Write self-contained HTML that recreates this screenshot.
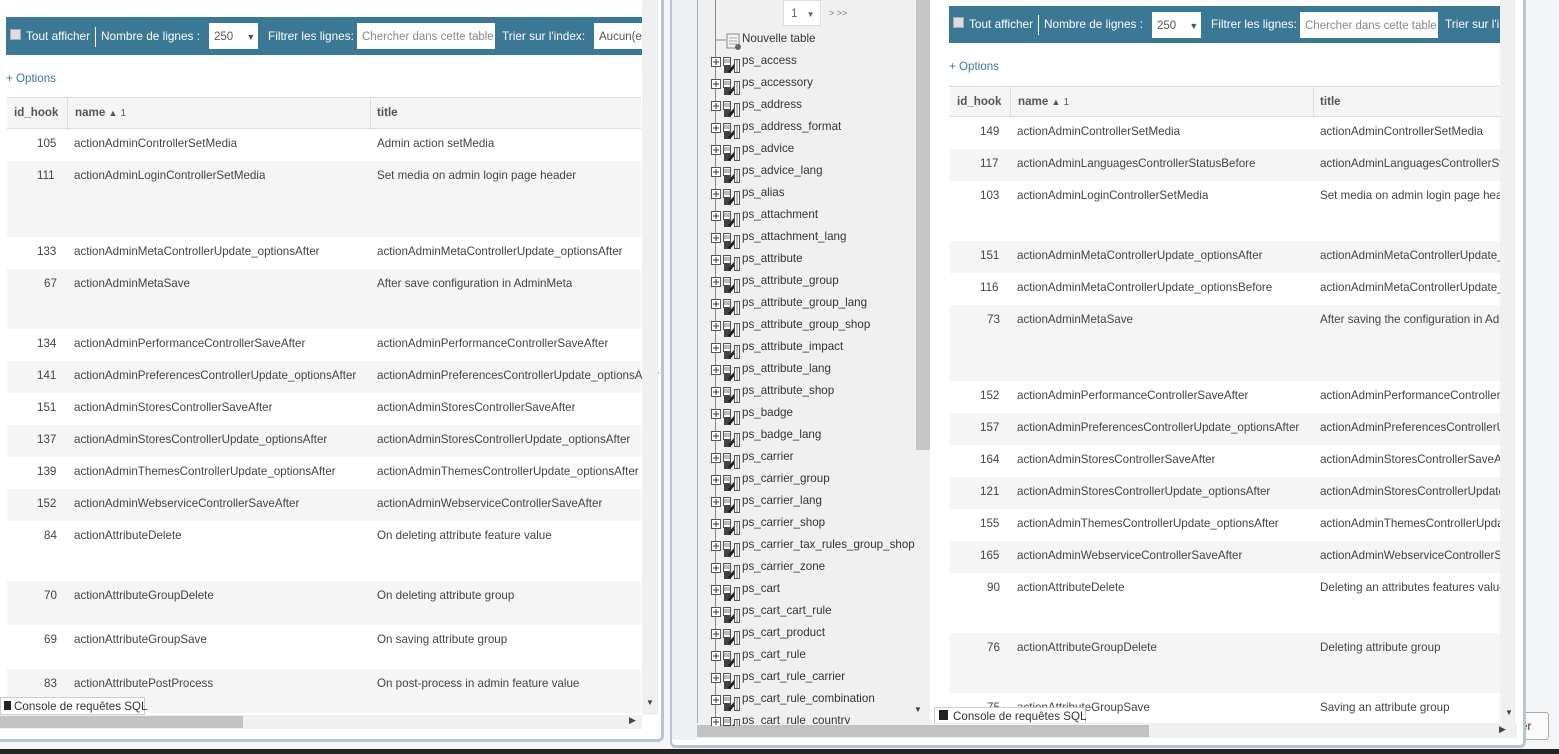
<!DOCTYPE html>
<html><head><meta charset="utf-8"><style>
*{box-sizing:border-box;margin:0;padding:0}
body{width:1559px;height:754px;position:relative;overflow:hidden;background:#f3f5f7;font-family:"Liberation Sans",sans-serif;font-size:11.6px;color:#444}
.a{position:absolute}
.win{position:absolute;background:#fff;overflow:hidden}
.bar{position:absolute;background:#3a7896;color:#fff;font-size:11.8px}
.bar span{position:absolute;top:12px;white-space:nowrap}
.inp{position:absolute;background:#fff;color:#888;font-size:11.5px;padding:8px 5px;white-space:nowrap;overflow:hidden}
.cb{position:absolute;width:11px;height:11px;background:#ddd;border:1px solid #aaa}
.row{position:absolute;left:0;right:0}
.row span{position:absolute;top:8px;white-space:nowrap;overflow:hidden}
.g{background:#f5f5f5}
.tree div{position:absolute;left:742px;white-space:nowrap;font-size:11.6px;color:#333}
.con{white-space:nowrap}
</style></head><body>
<div class="a" style="left:0;top:749px;width:1559px;height:5px;background:#222"></div>
<div class="a" style="left:1500px;top:712px;width:49px;height:28px;border:1px solid #aaa;border-radius:3px;background:#fafafa;color:#333;padding:7px 0 0 20px">er</div>

<!-- LEFT WINDOW -->
<div class="win" style="left:0;top:0;width:664px;height:742px;border-right:3px solid #b8c4d0;border-bottom:3px solid #b8c4d0;border-bottom-right-radius:6px">
 <div class="bar" style="left:6px;top:17px;width:636px;height:38px">
  <div class="cb" style="left:4px;top:12px"></div>
  <span style="left:20px">Tout afficher</span>
  <div class="a" style="left:89px;top:10px;width:1px;height:20px;background:#fff"></div>
  <span style="left:95px">Nombre de lignes :</span>
  <div class="inp" style="left:203px;top:6px;width:49px;height:26px;color:#555">250 <b style="font-size:9px;margin-left:10px">▼</b></div>
  <span style="left:262px">Filtrer les lignes:</span>
  <div class="inp" style="left:351px;top:6px;width:138px;height:26px">Chercher dans cette table</div>
  <span style="left:496px">Trier sur l'index:</span>
  <div class="inp" style="left:588px;top:6px;width:60px;height:26px;color:#555">Aucun(e)</div>
 </div>
 <div class="a" style="left:6px;top:72px;color:#3a7896">+ Options</div>
 <div class="a" style="left:7px;top:97px;width:634px;height:640px">
  <div class="row g" style="top:0;height:32px;border-top:1px solid #ddd;border-bottom:1px solid #ddd;font-weight:bold;color:#555"><span style="left:7px">id_hook</span><span style="left:68px">name <small style="font-size:9px">▲</small> <small style="font-weight:normal">1</small></span><span style="left:370px">title</span><div class="a" style="left:60px;top:0;width:1px;height:32px;background:#ddd"></div><div class="a" style="left:363px;top:0;width:1px;height:32px;background:#ddd"></div></div>
  <div class="row" style="top:32px;height:32px"><span style="left:30px">105</span><span style="left:67px">actionAdminControllerSetMedia</span><span style="left:370px">Admin action setMedia</span></div>
  <div class="row g" style="top:64px;height:76px"><span style="left:30px">111</span><span style="left:67px">actionAdminLoginControllerSetMedia</span><span style="left:370px">Set media on admin login page header</span></div>
  <div class="row" style="top:140px;height:32px"><span style="left:30px">133</span><span style="left:67px">actionAdminMetaControllerUpdate_optionsAfter</span><span style="left:370px">actionAdminMetaControllerUpdate_optionsAfter</span></div>
  <div class="row g" style="top:172px;height:60px"><span style="left:37px">67</span><span style="left:67px">actionAdminMetaSave</span><span style="left:370px">After save configuration in AdminMeta</span></div>
  <div class="row" style="top:232px;height:32px"><span style="left:30px">134</span><span style="left:67px">actionAdminPerformanceControllerSaveAfter</span><span style="left:370px">actionAdminPerformanceControllerSaveAfter</span></div>
  <div class="row g" style="top:264px;height:32px"><span style="left:30px">141</span><span style="left:67px;width:290px;text-overflow:ellipsis">actionAdminPreferencesControllerUpdate_optionsAfter</span><span style="left:370px">actionAdminPreferencesControllerUpdate_optionsAfter</span></div>
  <div class="row" style="top:296px;height:32px"><span style="left:30px">151</span><span style="left:67px">actionAdminStoresControllerSaveAfter</span><span style="left:370px">actionAdminStoresControllerSaveAfter</span></div>
  <div class="row g" style="top:328px;height:32px"><span style="left:30px">137</span><span style="left:67px">actionAdminStoresControllerUpdate_optionsAfter</span><span style="left:370px">actionAdminStoresControllerUpdate_optionsAfter</span></div>
  <div class="row" style="top:360px;height:32px"><span style="left:30px">139</span><span style="left:67px">actionAdminThemesControllerUpdate_optionsAfter</span><span style="left:370px">actionAdminThemesControllerUpdate_optionsAfter</span></div>
  <div class="row g" style="top:392px;height:32px"><span style="left:30px">152</span><span style="left:67px">actionAdminWebserviceControllerSaveAfter</span><span style="left:370px">actionAdminWebserviceControllerSaveAfter</span></div>
  <div class="row" style="top:424px;height:60px"><span style="left:37px">84</span><span style="left:67px">actionAttributeDelete</span><span style="left:370px">On deleting attribute feature value</span></div>
  <div class="row g" style="top:484px;height:44px"><span style="left:37px">70</span><span style="left:67px">actionAttributeGroupDelete</span><span style="left:370px">On deleting attribute group</span></div>
  <div class="row" style="top:528px;height:44px"><span style="left:37px">69</span><span style="left:67px">actionAttributeGroupSave</span><span style="left:370px">On saving attribute group</span></div>
  <div class="row g" style="top:572px;height:44px"><span style="left:37px">83</span><span style="left:67px">actionAttributePostProcess</span><span style="left:370px">On post-process in admin feature value</span></div>
 </div>
 <div class="a con" style="left:0;top:697px;width:145px;height:18px;border:1px solid #ccc;background:#fff;padding:2px 0 0 3px;color:#333"><span style="display:inline-block;width:7px;height:9px;background:#222;margin-right:3px"></span>Console de requêtes SQL</div>
 <div class="a" style="left:0;top:715px;width:642px;height:14px;background:#f0f0f0"><div class="a" style="left:0;top:1px;width:243px;height:12px;background:#c2c2c2"></div><div class="a" style="left:629px;top:0;font-size:9px">▶</div></div>
 <div class="a" style="left:642px;top:0;width:16px;height:715px;background:#f0f0f0"><div class="a" style="left:4px;top:698px;font-size:8px">▼</div></div>
</div>

<!-- RIGHT WINDOW -->
<div class="win" style="left:670px;top:0;width:856px;height:748px;border-left:2px solid #b8c4d0;border-right:3px solid #b8c4d0;border-bottom:3px solid #b8c4d0;border-radius:0 0 6px 6px">
 <div class="a" style="left:0;top:0;width:25px;height:740px;background:#eef1f4"></div>
 <div class="a" style="left:25px;top:0;width:233px;height:725px;background:#f0f0f0;border-left:1px solid #aaa"></div>
 <div class="a" style="left:244px;top:0;width:14px;height:450px;background:#c6c6c6"></div>
 <div class="a" style="left:258px;top:0;width:2px;height:725px;background:#ddd"></div>
 <div class="a" style="left:242px;top:705px;font-size:8px">▼</div>
 <div class="a" style="left:25px;top:723px;width:820px;height:15px;background:#f0f0f0"><div class="a" style="left:0;top:2px;width:452px;height:12px;background:#c2c2c2"></div><div class="a" style="left:802px;top:1px;font-size:9px">▶</div></div>
</div>
<div class="tree">
 <div class="a" style="left:783px;top:0;width:38px;height:26px;background:#fff;border:1px solid #ddd;padding:6px 0 0 7px;color:#666">1 <b style="font-size:8px;margin-left:6px">▼</b></div>
 <div style="left:829px;top:8px;font-size:9px;color:#777">&gt; &gt;&gt;</div>
 <div class="a" style="left:715px;top:0;width:1px;height:725px;background:#888"></div>
 <svg class="a" style="left:716px;top:31px" width="26" height="20"><path d="M0 9h10" stroke="#888"/><rect x="11" y="3" width="12" height="14" fill="#f4f4f4" stroke="#888"/><path d="M13 7h8M13 10h8M13 13h8" stroke="#aaa"/><circle cx="22" cy="16" r="3" fill="#666"/></svg>
 <div style="top:32px">Nouvelle table</div>
 <div style="top:54px">ps_access</div><div style="top:76px">ps_accessory</div><div style="top:98px">ps_address</div><div style="top:120px">ps_address_format</div><div style="top:142px">ps_advice</div><div style="top:164px">ps_advice_lang</div><div style="top:186px">ps_alias</div><div style="top:208px">ps_attachment</div><div style="top:230px">ps_attachment_lang</div><div style="top:252px">ps_attribute</div><div style="top:274px">ps_attribute_group</div><div style="top:296px">ps_attribute_group_lang</div><div style="top:318px">ps_attribute_group_shop</div><div style="top:340px">ps_attribute_impact</div><div style="top:362px">ps_attribute_lang</div><div style="top:384px">ps_attribute_shop</div><div style="top:406px">ps_badge</div><div style="top:428px">ps_badge_lang</div><div style="top:450px">ps_carrier</div><div style="top:472px">ps_carrier_group</div><div style="top:494px">ps_carrier_lang</div><div style="top:516px">ps_carrier_shop</div><div style="top:538px">ps_carrier_tax_rules_group_shop</div><div style="top:560px">ps_carrier_zone</div><div style="top:582px">ps_cart</div><div style="top:604px">ps_cart_cart_rule</div><div style="top:626px">ps_cart_product</div><div style="top:648px">ps_cart_rule</div><div style="top:670px">ps_cart_rule_carrier</div><div style="top:692px">ps_cart_rule_combination</div><div style="top:714px;height:10px;overflow:hidden">ps_cart_rule_country</div>
</div>
<svg class="a" style="left:708px;top:54px" width="34" height="672">
 <defs>
  <g id="it">
   <rect x="3.5" y="3.5" width="9" height="9" fill="#fff" stroke="#555"/>
   <path d="M5 8h6M8 5v6" stroke="#333"/>
   <rect x="15.5" y="3.5" width="7" height="8" fill="#fff" stroke="#555"/>
   <path d="M16 6h6M16 8h6" stroke="#777"/>
   <rect x="16" y="11" width="7" height="8" fill="#444"/>
   <path d="M20 17l6-7 2 2-6 7z" fill="#222"/>
   <rect x="26.5" y="5.5" width="5" height="13" fill="#fff" stroke="#555"/>
   <path d="M29 6v12" stroke="#777"/>
  </g>
 </defs>
 <use href="#it" y="0"/><use href="#it" y="22"/><use href="#it" y="44"/><use href="#it" y="66"/><use href="#it" y="88"/><use href="#it" y="110"/><use href="#it" y="132"/><use href="#it" y="154"/><use href="#it" y="176"/><use href="#it" y="198"/><use href="#it" y="220"/><use href="#it" y="242"/><use href="#it" y="264"/><use href="#it" y="286"/><use href="#it" y="308"/><use href="#it" y="330"/><use href="#it" y="352"/><use href="#it" y="374"/><use href="#it" y="396"/><use href="#it" y="418"/><use href="#it" y="440"/><use href="#it" y="462"/><use href="#it" y="484"/><use href="#it" y="506"/><use href="#it" y="528"/><use href="#it" y="550"/><use href="#it" y="572"/><use href="#it" y="594"/><use href="#it" y="616"/><use href="#it" y="638"/><use href="#it" y="660"/>
</svg>

<!-- right main content -->
<div class="a" style="left:930px;top:0;width:585px;height:723px;background:#fff;overflow:hidden">
 <div class="bar" style="left:19px;top:6px;width:560px;height:37px">
  <div class="cb" style="left:4px;top:11px"></div>
  <span style="left:20px;top:11px">Tout afficher</span>
  <div class="a" style="left:89px;top:9px;width:1px;height:20px;background:#fff"></div>
  <span style="left:95px;top:11px">Nombre de lignes :</span>
  <div class="inp" style="left:203px;top:6px;width:49px;height:26px;color:#555">250 <b style="font-size:9px;margin-left:10px">▼</b></div>
  <span style="left:262px;top:11px">Filtrer les lignes:</span>
  <div class="inp" style="left:351px;top:6px;width:138px;height:26px">Chercher dans cette table</div>
  <span style="left:496px;top:11px">Trier sur l'index:</span>
 </div>
 <div class="a" style="left:19px;top:60px;color:#3a7896">+ Options</div>
 <div class="a" style="left:19px;top:86px;width:551px;height:640px">
  <div class="row g" style="top:0;height:31px;border-top:1px solid #ddd;border-bottom:1px solid #ddd;font-weight:bold;color:#555"><span style="left:8px">id_hook</span><span style="left:69px">name <small style="font-size:9px">▲</small> <small style="font-weight:normal">1</small></span><span style="left:371px">title</span><div class="a" style="left:61px;top:0;width:1px;height:31px;background:#ddd"></div><div class="a" style="left:364px;top:0;width:1px;height:31px;background:#ddd"></div></div>
  <div class="row" style="top:31px;height:32px"><span style="left:31px">149</span><span style="left:68px">actionAdminControllerSetMedia</span><span style="left:371px">actionAdminControllerSetMedia</span></div>
  <div class="row g" style="top:63px;height:32px"><span style="left:31px">117</span><span style="left:68px">actionAdminLanguagesControllerStatusBefore</span><span style="left:371px">actionAdminLanguagesControllerStatusBefore</span></div>
  <div class="row" style="top:95px;height:60px"><span style="left:31px">103</span><span style="left:68px">actionAdminLoginControllerSetMedia</span><span style="left:371px">Set media on admin login page header</span></div>
  <div class="row g" style="top:155px;height:32px"><span style="left:31px">151</span><span style="left:68px">actionAdminMetaControllerUpdate_optionsAfter</span><span style="left:371px">actionAdminMetaControllerUpdate_optionsAfter</span></div>
  <div class="row" style="top:187px;height:32px"><span style="left:31px">116</span><span style="left:68px">actionAdminMetaControllerUpdate_optionsBefore</span><span style="left:371px">actionAdminMetaControllerUpdate_optionsBefore</span></div>
  <div class="row g" style="top:219px;height:76px"><span style="left:38px">73</span><span style="left:68px">actionAdminMetaSave</span><span style="left:371px">After saving the configuration in AdminMeta</span></div>
  <div class="row" style="top:295px;height:32px"><span style="left:31px">152</span><span style="left:68px">actionAdminPerformanceControllerSaveAfter</span><span style="left:371px">actionAdminPerformanceControllerSaveAfter</span></div>
  <div class="row g" style="top:327px;height:32px"><span style="left:31px">157</span><span style="left:68px;width:290px;text-overflow:ellipsis">actionAdminPreferencesControllerUpdate_optionsAfter</span><span style="left:371px">actionAdminPreferencesControllerUpdate_optionsAfter</span></div>
  <div class="row" style="top:359px;height:32px"><span style="left:31px">164</span><span style="left:68px">actionAdminStoresControllerSaveAfter</span><span style="left:371px">actionAdminStoresControllerSaveAfter</span></div>
  <div class="row g" style="top:391px;height:32px"><span style="left:31px">121</span><span style="left:68px">actionAdminStoresControllerUpdate_optionsAfter</span><span style="left:371px">actionAdminStoresControllerUpdate_optionsAfter</span></div>
  <div class="row" style="top:423px;height:32px"><span style="left:31px">155</span><span style="left:68px">actionAdminThemesControllerUpdate_optionsAfter</span><span style="left:371px">actionAdminThemesControllerUpdate_optionsAfter</span></div>
  <div class="row g" style="top:455px;height:32px"><span style="left:31px">165</span><span style="left:68px">actionAdminWebserviceControllerSaveAfter</span><span style="left:371px">actionAdminWebserviceControllerSaveAfter</span></div>
  <div class="row" style="top:487px;height:60px"><span style="left:38px">90</span><span style="left:68px">actionAttributeDelete</span><span style="left:371px">Deleting an attributes features value</span></div>
  <div class="row g" style="top:547px;height:60px"><span style="left:38px">76</span><span style="left:68px">actionAttributeGroupDelete</span><span style="left:371px">Deleting attribute group</span></div>
  <div class="row" style="top:607px;height:32px"><span style="left:38px">75</span><span style="left:68px">actionAttributeGroupSave</span><span style="left:371px">Saving an attribute group</span></div>
 </div>
 <div class="a con" style="left:4px;top:707px;width:152px;height:18px;border:1px solid #ccc;background:#fff;padding:2px 0 0 4px;color:#333"><span style="display:inline-block;width:9px;height:10px;background:#222;margin-right:5px"></span>Console de requêtes SQL</div>
 <div class="a" style="left:570px;top:0;width:15px;height:723px;background:#f0f0f0"><div class="a" style="left:5px;top:708px;font-size:8px">▼</div></div>
</div>
</body></html>
